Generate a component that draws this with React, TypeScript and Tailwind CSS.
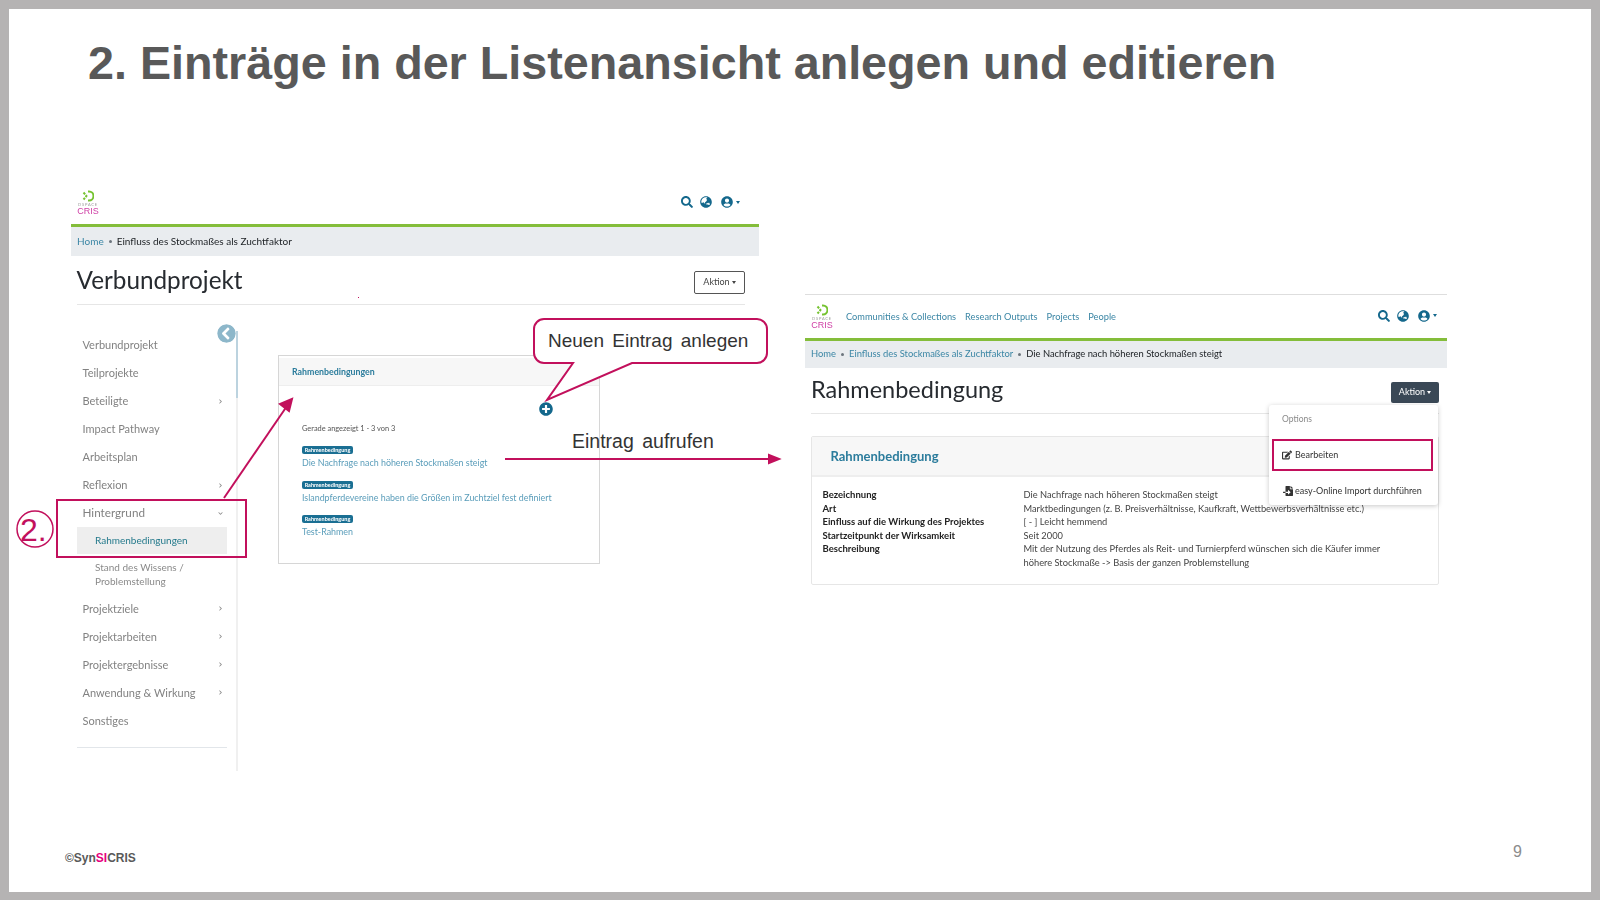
import React from 'react';
import {
  FaSearch,
  FaGlobeAsia,
  FaUserCircle,
  FaPlusCircle,
  FaChevronCircleLeft,
  FaChevronRight,
  FaChevronDown,
  FaEdit,
  FaFileImport,
} from 'react-icons/fa';

const font = "font-['Lato','Noto_Sans',sans-serif]";

function Logo() {
  return (
    <div className="flex w-[24px] flex-col items-center">
      <svg viewBox="0 0 12 12" className="h-[12px] w-[12px]" fill="none" stroke="#76c331" strokeWidth="2">
        <path d="M6 1.5 h1 a4.5 4.5 0 0 1 0 9 h-1" />
        <path d="M1.5 2.5 L4.5 6 L1.5 9.5" strokeLinejoin="round" strokeDasharray="2.500 1" />
      </svg>
      <span className="mt-[1px] text-[4px] leading-[4px] tracking-[0.8px] text-[#9a9a9a]">DSPACE</span>
      <span className="font-['Liberation_Sans',sans-serif] text-[9px] leading-[8px] text-[#cf3fa5]">CRIS</span>
    </div>
  );
}

function NavIcons() {
  return (
    <div className="flex items-center text-[#14688c]">
      <FaSearch className="h-[12px] w-[12px]" />
      <FaGlobeAsia className="ml-[7px] h-[12px] w-[12px]" />
      <FaUserCircle className="ml-[9px] h-[12px] w-[12px]" />
      <span className="ml-[3px] h-0 w-0 border-x-[2.5px] border-t-[3px] border-x-transparent border-t-[#14688c]" />
    </div>
  );
}

const Dot = () => <span className="mx-[5px] inline-block h-[3px] w-[3px] rounded-full bg-[#6c757d] align-middle" />;

function SideItem({ label, arrow }: { label: string; arrow?: boolean }) {
  return (
    <div className="flex h-[28px] items-center justify-between pl-[5.500px] pr-[4px] text-[11px] text-[#828282]">
      <span>{label}</span>
      {arrow && <FaChevronRight className="h-[5px] w-[5px] text-[#8a8a8a]" />}
    </div>
  );
}

function ListEntry({ title }: { title: string }) {
  return (
    <div className="mb-[10.500px]">
      <span className="block h-[8px] w-[51px] rounded-[2px] bg-[#1a6f93] text-center text-[5.5px] font-bold leading-[8px] text-white">
        Rahmenbedingung
      </span>
      <p className="mt-[2px] text-[8.9px] leading-[14px] text-[#5a9dba]">{title}</p>
    </div>
  );
}

function LeftShot() {
  return (
    <section className={`absolute left-[71px] top-[180px] w-[688px] blur-[0.3px] ${font}`}>
      <header className="flex h-[44px] items-center justify-between pl-[5px] pr-[19px]">
        <Logo />
        <NavIcons />
      </header>
      <div className="h-[3px] bg-[#84bd3a]" />
      <nav className="flex h-[29px] items-center bg-[#e9ecef] px-[6px] text-[10px] text-[#212529]">
        <span className="text-[#3b86a5]">Home</span>
        <Dot />
        <span>Einfluss des Stockmaßes als Zuchtfaktor</span>
      </nav>
      <div className="ml-[5.500px] mr-[14px] flex h-[49px] items-center justify-between border-b border-[#e6e6e6]">
        <h1 className="text-[24.300px] leading-[48px] text-[#272b30]">Verbundprojekt</h1>
        <button className="mt-[4px] flex h-[23px] w-[51px] items-center justify-center gap-[2px] rounded-[2px] border border-[#555] text-[9px] text-[#444]">
          Aktion
          <span className="h-0 w-0 border-x-[2px] border-t-[3px] border-x-transparent border-t-[#444]" />
        </button>
      </div>
      <div className="flex">
        <aside className="relative ml-[6px] mt-[26px] h-[440px] w-[161px] border-r-2 border-[#f0f0f0] pr-[9px]">
          <div className="absolute right-[-2px] top-0 h-[67px] w-[2px] bg-[#bcd3df]" />
          <FaChevronCircleLeft className="absolute right-0 top-[-7px] h-[19px] w-[19px] rounded-full bg-white text-[#8db7ca]" />
          <SideItem label="Verbundprojekt" />
          <SideItem label="Teilprojekte" />
          <SideItem label="Beteiligte" arrow />
          <SideItem label="Impact Pathway" />
          <SideItem label="Arbeitsplan" />
          <SideItem label="Reflexion" arrow />
          <div className="flex h-[28px] items-center justify-between pl-[5.500px] pr-[4px] text-[11.700px] text-[#828282]">
            <span>Hintergrund</span>
            <FaChevronDown className="h-[5px] w-[5px] text-[#8a8a8a]" />
          </div>
          <div className="flex h-[27px] items-center bg-[#eeeeee] pl-[18px] text-[10px] text-[#257a8c]">
            Rahmenbedingungen
          </div>
          <div className="py-[6px] pl-[18px] text-[10px] leading-[14.4px] text-[#8a8a8a]">
            Stand des Wissens /<br />
            Problemstellung
          </div>
          <SideItem label="Projektziele" arrow />
          <SideItem label="Projektarbeiten" arrow />
          <SideItem label="Projektergebnisse" arrow />
          <SideItem label="Anwendung & Wirkung" arrow />
          <SideItem label="Sonstiges" />
          <div className="mt-[12px] h-px bg-[#e2e6ea]" />
        </aside>
        <article className="ml-[40px] mt-[50px] h-[209px] w-[322px] border border-[#d6d6d6] pt-[2px]">
          <div className="flex h-[28px] items-center border-b border-[#eeeeee] bg-[#f7f7f7] pl-[13px] text-[8.8px] font-bold text-[#2b7c9c]">
            Rahmenbedingungen
          </div>
          <div className="flex h-[30px] items-end justify-end pr-[46px]">
            <FaPlusCircle className="h-[14px] w-[14px] text-[#14688c]" />
          </div>
          <div className="pl-[23px] pt-[7px]">
            <p className="mb-[12px] text-[7.4px] leading-[11px] text-[#555]">Gerade angezeigt 1 - 3 von 3</p>
            <ListEntry title="Die Nachfrage nach höheren Stockmaßen steigt" />
            <ListEntry title="Islandpferdevereine haben die Größen im Zuchtziel fest definiert" />
            <ListEntry title="Test-Rahmen" />
          </div>
        </article>
      </div>
    </section>
  );
}

const details = [
  ['Bezeichnung', 'Die Nachfrage nach höheren Stockmaßen steigt'],
  ['Art', 'Marktbedingungen (z. B. Preisverhältnisse, Kaufkraft, Wettbewerbsverhältnisse etc.)'],
  ['Einfluss auf die Wirkung des Projektes', '[ - ] Leicht hemmend'],
  ['Startzeitpunkt der Wirksamkeit', 'Seit 2000'],
  ['Beschreibung', 'Mit der Nutzung des Pferdes als Reit- und Turnierpferd wünschen sich die Käufer immer höhere Stockmaße -> Basis der ganzen Problemstellung'],
];

function RightShot() {
  return (
    <section className={`absolute left-[805px] top-[294px] w-[642px] border-t border-[#dedede] blur-[0.3px] ${font}`}>
      <header className="flex h-[43px] items-center pl-[5px] pr-[10px]">
        <Logo />
        <div className="ml-[12px] flex gap-[9px] text-[9.25px] text-[#3b86a5]">
          <span>Communities &amp; Collections</span>
          <span>Research Outputs</span>
          <span>Projects</span>
          <span>People</span>
        </div>
        <div className="ml-auto mb-[2px]">
          <NavIcons />
        </div>
      </header>
      <div className="h-[3px] bg-[#84bd3a]" />
      <nav className="flex h-[27px] items-center bg-[#e9ecef] px-[6px] text-[9.4px] text-[#212529]">
        <span className="text-[#3b86a5]">Home</span>
        <Dot />
        <span className="text-[#3b86a5]">Einfluss des Stockmaßes als Zuchtfaktor</span>
        <Dot />
        <span>Die Nachfrage nach höheren Stockmaßen steigt</span>
      </nav>
      <div className="ml-[6px] mr-[8px] flex h-[46px] items-center justify-between border-b border-[#e6e6e6]">
        <h2 className="mb-[4px] text-[23.500px] leading-[46px] text-[#272b30]">Rahmenbedingung</h2>
        <button className="mt-[3px] flex h-[21px] w-[48px] items-center justify-center gap-[2px] rounded-[2px] bg-[#3a4856] text-[9px] text-white">
          Aktion
          <span className="h-0 w-0 border-x-[2px] border-t-[3px] border-x-transparent border-t-white" />
        </button>
      </div>
      <article className="ml-[6px] mr-[8px] mt-[22px] h-[149px] rounded-[2px] border border-[#e6e6e6]">
        <div className="flex h-[40px] items-center border-b-2 border-[#eeeeee] bg-[#f7f7f7] pl-[18.500px] pt-[1px] text-[13px] font-bold text-[#2b7c9c]">
          Rahmenbedingung
        </div>
        <dl className="grid grid-cols-[201px_1fr] pl-[10.500px] pr-[40px] pt-[11px] text-[9.3px] leading-[13.5px] text-[#444]">
          {details.map(([k, v]) => (
            <React.Fragment key={k}>
              <dt className="text-[9.5px] font-bold text-[#222]">{k}</dt>
              <dd>{v}</dd>
            </React.Fragment>
          ))}
        </dl>
      </article>
      <div className="absolute left-[464px] top-[110px] z-10 h-[100px] w-[169px] rounded-[3px] bg-white text-[9px] text-[#333] shadow-[0_1px_5px_rgba(0,0,0,0.22)]">
        <p className="pl-[13px] pt-[8px] text-[8.5px] text-[#8a8a8a]">Options</p>
        <p className="mt-[22px] flex items-center gap-[3px] pl-[13px]">
          <FaEdit className="h-[10px] w-[10px] text-[#333]" />
          Bearbeiten
        </p>
        <p className="mt-[23px] flex items-center gap-[2px] pl-[14px]">
          <FaFileImport className="h-[10px] w-[10px] text-[#333]" />
          easy-Online Import durchführen
        </p>
      </div>
    </section>
  );
}

function Annotations() {
  return (
    <svg viewBox="0 0 1600 900" className="pointer-events-none absolute inset-0 z-20 h-[900px] w-[1600px]" fill="none" stroke="#c2105c" strokeWidth="2">
      <path d="M224 498 L287 406" />
      <path d="M292 399 L280 404 L289 411 Z" fill="#c2105c" />
      <path d="M505 459 L770 459" />
      <path d="M779 459 L769 455 L769 463 Z" fill="#c2105c" />
      <rect x="57" y="500" width="189" height="57" />
      <rect x="1273" y="440" width="159" height="30" />
      <circle cx="35" cy="529" r="18" strokeWidth="1.500" />
      <path
        d="M544 319 H757 A10 10 0 0 1 767 329 V353 A10 10 0 0 1 757 363 H632 L547 400 L573 363 H544 A10 10 0 0 1 534 353 V329 A10 10 0 0 1 544 319 Z"
        fill="#ffffff"
      />
    </svg>
  );
}

export default function App() {
  return (
    <div className="relative h-[900px] w-[1600px] overflow-hidden bg-[#b5b3b3] pb-[8px] pl-[9px] pr-[9px] pt-[9px] font-['Liberation_Sans',sans-serif]">
      <div className="h-full bg-white pl-[79px] pt-[27px]">
        <h1 className="text-[46.7px] font-bold leading-[54px] text-[#595959]">2. Einträge in der Listenansicht anlegen und editieren</h1>
      </div>
      <LeftShot />
      <RightShot />
      <div className="absolute left-[358px] top-[297px] h-px w-px bg-[#c2105c]" />
      <Annotations />
      <span className="absolute left-[548px] top-[329px] z-30 text-[19px] leading-[24px] text-[#333] [word-spacing:3px]">Neuen Eintrag anlegen</span>
      <span className="absolute left-[572px] top-[429px] z-30 text-[19.500px] leading-[24px] text-[#333] [word-spacing:3px]">Eintrag aufrufen</span>
      <span className="absolute left-[20px] top-[512px] z-30 text-[32px] leading-[36px] text-[#c2105c]">2.</span>
      <p className="absolute left-[65px] top-[851px] text-[12px] font-bold leading-[14px] text-[#595959]">
        ©Syn<span className="text-[#e6007e]">SI</span>CRIS
      </p>
      <span className="absolute left-[1513px] top-[843px] text-[16px] leading-[18px] text-[#8c8c8c]">9</span>
    </div>
  );
}
